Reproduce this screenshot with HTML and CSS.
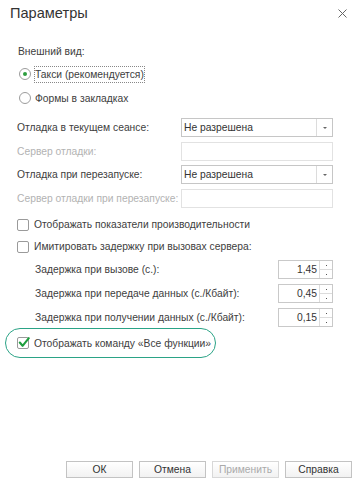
FILE: index.html
```html
<!DOCTYPE html>
<html lang="ru">
<head>
<meta charset="utf-8">
<link rel="stylesheet" href="styles.css">
</head>
<body>
<div class="dialog">
  <div class="header">
    <div class="title">Параметры</div>
    <div class="close">
      <svg width="9" height="9" viewBox="0 0 9 9"><path d="M0.5 0.5 L8.5 8.5 M8.5 0.5 L0.5 8.5" stroke="#666" stroke-width="1" fill="none"/></svg>
    </div>
  </div>
  <div class="content">
    <div class="group-label">Внешний вид:</div>
    <div class="radio-row first-radio">
      <span class="radio checked"><span class="dot"></span></span>
      <span class="radio-label focused">Такси (рекомендуется)</span>
    </div>
    <div class="radio-row">
      <span class="radio"></span>
      <span class="radio-label">Формы в закладках</span>
    </div>

    <div class="form-grid">
      <div class="lbl">Отладка в текущем сеансе:</div>
      <div class="select"><span class="sel-text">Не разрешена</span><span class="sel-btn"><span class="tri"></span></span></div>
      <div class="lbl disabled">Сервер отладки:</div>
      <div class="input disabled-input"></div>
      <div class="lbl">Отладка при перезапуске:</div>
      <div class="select"><span class="sel-text">Не разрешена</span><span class="sel-btn"><span class="tri"></span></span></div>
      <div class="lbl disabled">Сервер отладки при перезапуске:</div>
      <div class="input disabled-input"></div>
    </div>

    <div class="check-row first-check">
      <span class="checkbox"></span>
      <span>Отображать показатели производительности</span>
    </div>
    <div class="check-row">
      <span class="checkbox"></span>
      <span>Имитировать задержку при вызовах сервера:</span>
    </div>

    <div class="delay-grid">
      <div class="lbl">Задержка при вызове (с.):</div>
      <div class="spin"><span class="spin-val">1,45</span><span class="spin-btns"><span class="sb"><i></i></span><span class="sb"><i></i></span></span></div>
      <div class="lbl">Задержка при передаче данных (с./Кбайт):</div>
      <div class="spin"><span class="spin-val">0,45</span><span class="spin-btns"><span class="sb"><i></i></span><span class="sb"><i></i></span></span></div>
      <div class="lbl">Задержка при получении данных (с./Кбайт):</div>
      <div class="spin"><span class="spin-val">0,15</span><span class="spin-btns"><span class="sb"><i></i></span><span class="sb"><i></i></span></span></div>
    </div>

    <div class="highlight">
      <span class="checkbox checked">
        <svg width="12" height="11" viewBox="0 0 12 11"><path d="M1.8 5.5 L4.6 8.8 L10.8 1.2" stroke="#1e9e3e" stroke-width="2.1" fill="none" stroke-linecap="round" stroke-linejoin="round"/></svg>
      </span>
      <span>Отображать команду «Все функции»</span>
    </div>
  </div>
  <div class="footer">
    <button class="btn">ОК</button>
    <button class="btn">Отмена</button>
    <button class="btn disabled-btn">Применить</button>
    <button class="btn">Справка</button>
  </div>
</div>
</body>
</html>
```

FILE: styles.css
```css
html, body {
  margin: 0;
  padding: 0;
  background: #fff;
}
body {
  font-family: "Liberation Sans", Arial, sans-serif;
  font-size: 10.3px;
  color: #404040;
}
.dialog {
  width: 357px;
  height: 483px;
  display: flex;
  flex-direction: column;
  box-sizing: border-box;
}
.header {
  display: flex;
  justify-content: space-between;
  align-items: center;
  padding: 0 10px 0 10px;
  height: 26px;
  box-sizing: border-box;
}
.title {
  font-size: 14.6px;
  color: #333;
}
.close {
  width: 9px;
  height: 9px;
  display: flex;
  margin-top: 1px;
}
.content {
  padding: 19px 0 0 17px;
  flex: 1;
}
.group-label {
  height: 14px;
  line-height: 14px;
  margin-left: 1px;
}
.radio-row {
  display: flex;
  align-items: center;
  height: 24px;
  margin-left: 2px;
}
.first-radio { margin-top: 3px; }
.radio {
  width: 10px;
  height: 10px;
  border: 1px solid #9c9c9c;
  border-radius: 50%;
  box-sizing: content-box;
  display: flex;
  align-items: center;
  justify-content: center;
  margin-right: 3px;
}
.radio .dot {
  width: 4px;
  height: 4px;
  border-radius: 50%;
  background: #2d9e3f;
}
.radio-label {
  padding: 1px 0;
  line-height: 13px;
  border: 1px solid transparent;
}
.radio-label.focused {
  border: 1px dotted #888;
}
.form-grid {
  display: grid;
  grid-template-columns: 164px 152px;
  grid-auto-rows: 19px;
  row-gap: 4.5px;
  align-items: center;
  margin-top: 8px;
}
.lbl {
  line-height: 19px;
  white-space: nowrap;
}
.lbl.disabled {
  color: #b3b3b3;
}
.select, .input {
  height: 19px;
  box-sizing: border-box;
  border: 1px solid #c6c6c6;
  display: flex;
  align-items: center;
}
.disabled-input {
  border-color: #e2e2e2;
}
.sel-text {
  flex: 1;
  padding-left: 2px;
  color: #333;
}
.sel-btn {
  width: 15px;
  height: 100%;
  border-left: 1px solid #dcdcdc;
  display: flex;
  align-items: center;
  justify-content: center;
}
.tri {
  width: 0;
  height: 0;
  border-left: 2px solid transparent;
  border-right: 2px solid transparent;
  border-top: 2px solid #666;
}
.check-row {
  display: flex;
  align-items: center;
  height: 22px;
}
.first-check { margin-top: 6px; }
.checkbox {
  width: 10px;
  height: 10px;
  border: 1px solid #9a9a9a;
  border-radius: 2px;
  box-sizing: content-box;
  margin-right: 5px;
  position: relative;
  flex: none;
}
.checkbox.checked svg {
  position: absolute;
  left: 0;
  top: -1px;
}
.delay-grid {
  display: grid;
  grid-template-columns: 243px 55px;
  grid-auto-rows: 19px;
  row-gap: 5px;
  align-items: center;
  padding-left: 18px;
  margin-top: 2.5px;
}
.spin {
  display: flex;
  height: 19px;
  box-sizing: border-box;
  border: 1px solid #c9c9c9;
}
.spin-val {
  flex: 1;
  text-align: right;
  padding-right: 2px;
  line-height: 17px;
  color: #333;
}
.spin-btns {
  width: 12px;
  border-left: 1px solid #dcdcdc;
  display: flex;
  flex-direction: column;
}
.sb {
  flex: 1;
  display: flex;
  align-items: center;
  justify-content: center;
}
.sb + .sb { border-top: 1px solid #dcdcdc; }
.sb i {
  width: 1px;
  height: 1px;
  background: #555;
  display: block;
}
.highlight {
  display: inline-flex;
  align-items: center;
  box-sizing: border-box;
  margin-left: -12px;
  margin-top: 1px;
  padding: 0 4px 0 11px;
  height: 30px;
  border: 1.5px solid #2ba386;
  border-radius: 15px;
}
.footer {
  display: flex;
  justify-content: flex-end;
  gap: 6px;
  padding: 0 5px 5px 0;
}
.btn {
  width: 67px;
  height: 17px;
  box-sizing: border-box;
  border: 1px solid #c3c3c3;
  background: linear-gradient(#fff, #f2f2f2);
  font-family: "Liberation Sans", Arial, sans-serif;
  font-size: 10.3px;
  color: #333;
  padding: 0;
  line-height: 15px;
}
.disabled-btn {
  color: #aaa;
  border-color: #d8d8d8;
}
```
